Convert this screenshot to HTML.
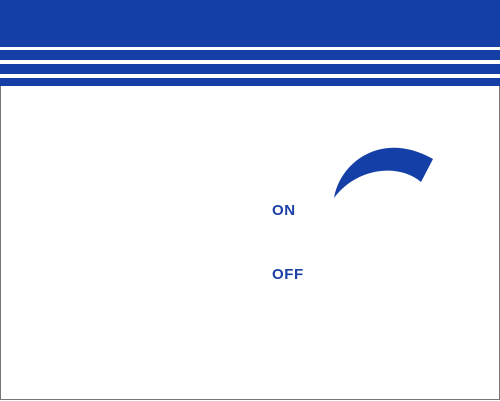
<!DOCTYPE html>
<html><head><style>
html,body{margin:0;padding:0;}
body{width:500px;height:401px;position:relative;overflow:hidden;background:#fff;font-family:"Liberation Sans",sans-serif;}
.b{position:absolute;left:0;width:500px;background:#143fa6;}
.frame{position:absolute;left:0;top:86px;width:498px;height:313px;border:1px solid #777;border-top:none;}
.t{position:absolute;color:#1a3fa6;font-weight:bold;font-size:15px;letter-spacing:0.6px;}
</style></head><body>
<div class="b" style="top:0;height:47px"></div>
<div class="b" style="top:50px;height:10px"></div>
<div class="b" style="top:64px;height:10px"></div>
<div class="b" style="top:78px;height:8px"></div>
<div class="frame"></div>
<svg style="position:absolute;left:0;top:0" width="500" height="401">
<path d="M334,198 C340,162 382,130 433,159 L421,182 C400,164 358,166 334,198 Z" fill="#143fa6"/>
</svg>
<div class="t" style="left:272px;top:202px">ON</div>
<div class="t" style="left:272px;top:266px">OFF</div>
</body></html>
